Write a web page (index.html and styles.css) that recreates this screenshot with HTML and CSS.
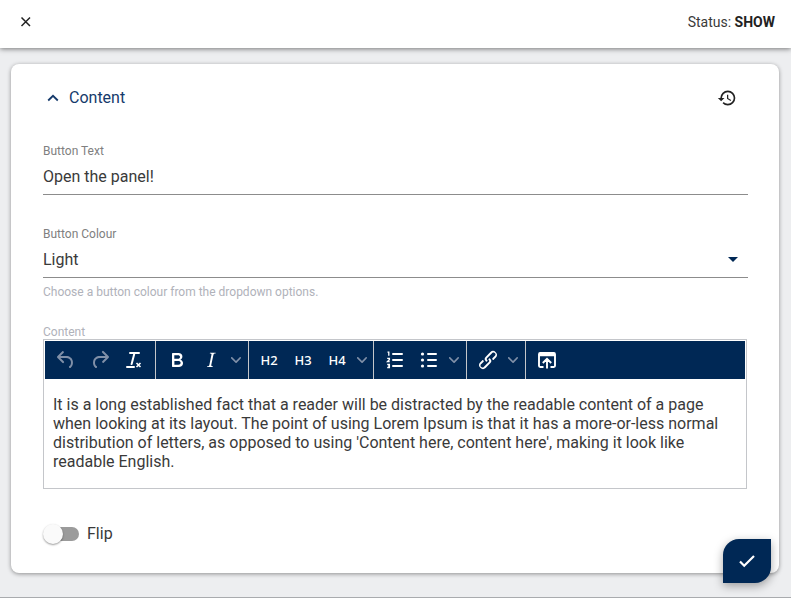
FILE: index.html
```html
<!DOCTYPE html>
<html lang="en">
<head>
<meta charset="utf-8">
<title>Content</title>
<link rel="stylesheet" href="styles.css">
</head>
<body>
<header class="topbar">
  <button class="icon-btn" type="button" aria-label="Close">
    <svg width="16" height="16" viewBox="0 0 16 16" fill="none" stroke="currentColor" stroke-width="1.500"><path d="M3.500 3.500l8.500 8.500M12 3.500L3.500 12"/></svg>
  </button>
  <div class="status">Status: <strong>SHOW</strong></div>
</header>
<main class="page">
  <form class="card">
    <div class="card-head">
      <button class="collapse" type="button">
        <svg width="20" height="20" viewBox="0 0 20 20" fill="none" stroke="currentColor" stroke-width="1.800"><path d="M5.200 13.500L10 8.800l4.800 4.700"/></svg>
        Content
      </button>
      <button class="icon-btn" type="button" aria-label="History">
        <svg width="20" height="20" viewBox="0 0 24 24" fill="currentColor"><path d="M13.500 8H12v5l4.280 2.540.72-1.210-3.500-2.080V8M13 3a9 9 0 0 0-9 9H1l3.960 4.030L9 12H6a7 7 0 0 1 7-7 7 7 0 0 1 7 7 7 7 0 0 1-7 7c-1.930 0-3.680-.79-4.940-2.060l-1.420 1.420A8.900 8.900 0 0 0 13 21a9 9 0 0 0 9-9 9 9 0 0 0-9-9"/></svg>
      </button>
    </div>

    <div class="field">
      <label for="text">Button Text</label>
      <input class="control" id="text" type="text" value="Open the panel!">
    </div>

    <div class="field">
      <label for="colour">Button Colour</label>
      <div class="select-wrap">
        <select class="control" id="colour"><option>Light</option><option>Dark</option></select>
        <svg class="caret" width="10" height="5" viewBox="0 0 10 5" aria-hidden="true"><path d="M0 0h10L5 5z" fill="#002855"/></svg>
      </div>
      <p class="hint">Choose a button colour from the dropdown options.</p>
    </div>

    <div class="rich">
      <div class="rich-label" id="rich-label">Content</div>
      <div class="editor">
        <div class="toolbar" role="toolbar" aria-label="Formatting">
          <div class="group">
            <button class="tool dim" type="button" aria-label="Undo"><svg width="24" height="24" viewBox="0 0 24 24"><path d="M6.400 8H12c3.700 0 6.200 2 6.800 5.100.6 2.700-.4 5.600-2.300 6.800a1 1 0 0 1-1-1.800c1.100-.6 1.800-2.700 1.400-4.600-.5-2.100-2.100-3.500-4.900-3.500H6.400l3.300 3.300a1 1 0 1 1-1.400 1.400l-5-5a1 1 0 0 1 0-1.400l5-5a1 1 0 0 1 1.400 1.400L6.400 8Z"/></svg></button>
            <button class="tool dim" type="button" aria-label="Redo"><svg width="24" height="24" viewBox="0 0 24 24"><path d="M17.600 10H12c-2.800 0-4.400 1.400-4.900 3.500-.4 2 .3 4 1.400 4.600a1 1 0 1 1-1 1.800c-2-1.200-2.900-4.100-2.300-6.800.6-3 3-5.100 6.800-5.100h5.600l-3.300-3.300a1 1 0 1 1 1.400-1.400l5 5a1 1 0 0 1 0 1.400l-5 5a1 1 0 0 1-1.400-1.400l3.300-3.300Z"/></svg></button>
            <button class="tool" type="button" aria-label="Remove format"><svg width="24" height="24" viewBox="0 0 24 24"><path d="M13.200 6a1 1 0 0 1 0 .2l-2.600 10a1 1 0 0 1-1 .8h-.2a.8.8 0 0 1-.8-1l2.600-10H8a1 1 0 1 1 0-2h9a1 1 0 0 1 0 2h-3.800ZM5 18h7a1 1 0 0 1 0 2H5a1 1 0 0 1 0-2Z"/><path class="line" d="M14.500 15l4 4M18.500 15l-4 4" stroke-width="1.600"/></svg></button>
          </div>
          <div class="group">
            <button class="tool" type="button" aria-label="Bold"><svg width="24" height="24" viewBox="0 0 24 24"><path d="M7.800 19c-.3 0-.5 0-.6-.2l-.2-.5V5.700c0-.2 0-.4.2-.5l.6-.2h5c1.500 0 2.700.3 3.500 1 .7.600 1.100 1.400 1.100 2.500a3 3 0 0 1-.6 1.900c-.4.600-1 1-1.600 1.200.4.100.9.300 1.300.6s.8.700 1 1.200c.4.400.5 1 .5 1.600 0 1.300-.4 2.300-1.300 3-.8.700-2.100 1-3.800 1H7.800Zm5-8.300c.6 0 1.200-.1 1.600-.5.400-.3.600-.7.600-1.300 0-1.100-.8-1.700-2.300-1.700H9.300v3.500h3.400Zm.5 6c.7 0 1.300-.1 1.700-.4.400-.4.600-.9.600-1.500s-.2-1-.7-1.400c-.4-.3-1-.4-2-.4H9.400v3.800h4Z"/></svg></button>
            <button class="tool" type="button" aria-label="Italic"><svg width="24" height="24" viewBox="0 0 24 24"><path d="M16.700 4.700l-.1.900h-.3c-.6 0-1 0-1.400.3-.3.300-.4.600-.5 1.100l-2.100 9.800v.6c0 .5.400.8 1.400.8h.2l-.2.800H8l.2-.8h.2c1.100 0 1.800-.5 2-1.500l2-9.800.1-.5c0-.6-.4-.8-1.400-.8h-.3l.2-.9h5.700Z"/></svg></button>
            <button class="more" type="button" aria-label="More styles"><svg width="10" height="10" viewBox="0 0 10 10"><path d="M8.700 2.200c.3-.3.800-.3 1 0 .4.400.4.900 0 1.200L5.700 7.800c-.3.300-.9.300-1.200 0L.2 3.400a.8.8 0 0 1 0-1.200c.3-.3.800-.3 1.100 0L5 6l3.700-3.800Z"/></svg></button>
          </div>
          <div class="group headings">
            <button class="tool" type="button">H2</button>
            <button class="tool" type="button">H3</button>
            <button class="tool" type="button">H4</button>
            <button class="more" type="button" aria-label="More headings"><svg width="10" height="10" viewBox="0 0 10 10"><path d="M8.700 2.200c.3-.3.800-.3 1 0 .4.400.4.900 0 1.200L5.700 7.800c-.3.300-.9.300-1.200 0L.2 3.400a.8.8 0 0 1 0-1.200c.3-.3.800-.3 1.100 0L5 6l3.700-3.800Z"/></svg></button>
          </div>
          <div class="group">
            <button class="tool" type="button" aria-label="Numbered list"><svg width="24" height="24" viewBox="0 0 24 24"><path class="line" d="M10 6h9M10 12h9M10 18h9" stroke-width="2" stroke-linecap="round"/><path class="line" d="M4.500 4.200h1.300v3.600M4.200 10.300h2.200v1.200L4.500 13.500h2.200M4.200 16.300h2.200v3.400H4.200M4.800 18h1.500" stroke-width="1.300"/></svg></button>
            <button class="tool" type="button" aria-label="Bulleted list"><svg width="24" height="24" viewBox="0 0 24 24"><path class="line" d="M11 6h8M11 12h8M11 18h8" stroke-width="2" stroke-linecap="round"/><circle cx="5.500" cy="6" r="1.600"/><circle cx="5.500" cy="12" r="1.600"/><circle cx="5.500" cy="18" r="1.600"/></svg></button>
            <button class="more" type="button" aria-label="More lists"><svg width="10" height="10" viewBox="0 0 10 10"><path d="M8.700 2.200c.3-.3.800-.3 1 0 .4.400.4.900 0 1.200L5.700 7.800c-.3.300-.9.300-1.200 0L.2 3.400a.8.8 0 0 1 0-1.200c.3-.3.800-.3 1.100 0L5 6l3.700-3.800Z"/></svg></button>
          </div>
          <div class="group">
            <button class="tool" type="button" aria-label="Link"><svg width="24" height="24" viewBox="0 0 24 24"><path d="M6.200 12.300a1 1 0 0 1 1.400 1.400l-2 2a2 2 0 1 0 2.600 2.800l4.800-4.800a1 1 0 0 0 0-1.400 1 1 0 1 1 1.400-1.300 2.900 2.900 0 0 1 0 4L9.600 20a3.900 3.900 0 0 1-5.500-5.500l2-2Zm11.600-.6a1 1 0 0 1-1.400-1.400l2-2a2 2 0 1 0-2.600-2.800L11 10.300a1 1 0 0 0 0 1.400A1 1 0 1 1 9.600 13a2.900 2.900 0 0 1 0-4L14.400 4a3.900 3.900 0 0 1 5.500 5.500l-2 2Z"/></svg></button>
            <button class="more" type="button" aria-label="More link options"><svg width="10" height="10" viewBox="0 0 10 10"><path d="M8.700 2.200c.3-.3.800-.3 1 0 .4.400.4.900 0 1.200L5.700 7.800c-.3.300-.9.300-1.200 0L.2 3.400a.8.8 0 0 1 0-1.200c.3-.3.800-.3 1.100 0L5 6l3.700-3.800Z"/></svg></button>
          </div>
          <div class="group">
            <button class="tool" type="button" aria-label="Open in window"><svg width="20" height="20" viewBox="0 0 20 20"><path class="line" d="M6.500 17H3.200a1.200 1.200 0 0 1-1.200-1.200V4.200A1.200 1.200 0 0 1 3.200 3h13.600A1.200 1.200 0 0 1 18 4.200v11.600a1.200 1.200 0 0 1-1.200 1.200H13.500M10 18.500V9.500M5.800 13L10 8.800l4.200 4.200" stroke-width="1.900"/><path class="line" d="M2 4.500h16" stroke-width="3.500"/></svg></button>
          </div>
        </div>
        <div class="editor-body" contenteditable="true" role="textbox" aria-multiline="true" aria-labelledby="rich-label" spellcheck="false">It is a long established fact that a reader will be distracted by the readable content of a page when looking at its layout. The point of using Lorem Ipsum is that it has a more-or-less normal distribution of letters, as opposed to using 'Content here, content here', making it look like readable English.</div>
      </div>
    </div>

    <label class="switch"><input type="checkbox" role="switch">Flip</label>
  </form>
</main>
<button class="fab" type="button" aria-label="Save">
  <svg width="20" height="20" viewBox="0 0 20 20" fill="none" stroke="#fff" stroke-width="2.200"><path d="M3 10.500l4.200 4.200L17 5"/></svg>
</button>
</body>
</html>
```
FILE: styles.css
```css
* { box-sizing: border-box; }

body {
  margin: 0;
  min-height: 100vh;
  display: flex;
  flex-direction: column;
  background: #edeef0;
  border-bottom: 1px solid #a9abae;
  color: #3a3a3a;
  font: 16px/19px Roboto, sans-serif;
}

button {
  margin: 0;
  padding: 0;
  border: 0;
  background: none;
  color: inherit;
  font: inherit;
  cursor: pointer;
}

svg { display: block; }

.topbar {
  display: flex;
  align-items: center;
  justify-content: space-between;
  height: 48px;
  padding: 0 16px 4px;
  background: #fff;
  box-shadow: 0 1px 5px rgba(0, 0, 0, .5);
}

.icon-btn {
  display: grid;
  place-items: center;
  width: 20px;
  height: 20px;
  color: #222;
}

.status { font-size: 14px; }
.status strong { color: #222; }

.page { padding: 16px 12px 24px 11px; }

.card {
  padding: 24px 31px 30px 32px;
  border-radius: 8px;
  background: #fff;
  box-shadow: 0 1px 4px rgba(0, 0, 0, .4);
}

.card-head {
  display: flex;
  align-items: center;
  justify-content: space-between;
  height: 20px;
  margin-bottom: 36px;
  padding-right: 11px;
}

.collapse {
  display: flex;
  align-items: center;
  gap: 6px;
  padding-bottom: 2px;
  color: #153a6b;
}

.field { margin-bottom: 32px; }

.field label,
.rich-label,
.hint {
  display: block;
  margin: 0;
  font-size: 12px;
  line-height: 14px;
}

.field label { color: #808080; }

.control {
  display: block;
  width: 100%;
  height: 37px;
  padding: 1px 0 0;
  border: 0;
  border-bottom: 1px solid #8c8c8c;
  border-radius: 0;
  outline: 0;
  appearance: none;
  background: transparent;
  color: #3a3a3a;
  font: inherit;
}

.select-wrap { position: relative; }

.caret {
  position: absolute;
  top: 16px;
  right: 10px;
  pointer-events: none;
}

.hint,
.rich-label { color: #b0b2ba; }

.hint { margin-top: 7px; }

.rich { margin-right: 1px; margin-top: -6px; }

.editor {
  border: 1px solid #c4c6ca;
  padding: 1px;
}

.toolbar {
  display: flex;
  height: 38px;
  background: #002855;
  color: #fff;
}

.group {
  display: flex;
  padding: 0 4px;
  border-right: 1px solid #c4c6ca;
}

.group:last-child { border-right: 0; }
.headings { padding: 0 3px; }

.tool,
.more {
  display: grid;
  place-items: center;
}

.tool { width: 34px; }
.more { width: 16px; }

.headings .tool {
  font-family: "Noto Sans", sans-serif;
  font-size: 13px;
  font-weight: 500;
}

.toolbar svg { fill: #fff; }

.toolbar .dim svg,
.toolbar .more svg { fill: #8090a8; }

.line {
  fill: none;
  stroke: #fff;
}

.editor-body {
  padding: 16px 8px;
  outline: 0;
}

.switch {
  display: flex;
  align-items: center;
  gap: 8px;
  width: max-content;
  margin-top: 35px;
}

.switch input {
  appearance: none;
  display: flex;
  align-items: center;
  width: 35px;
  height: 14px;
  margin: 0 0 0 1px;
  border-radius: 7px;
  background: #9b9b9b;
}

.switch input::before {
  content: "";
  flex: none;
  width: 20px;
  height: 20px;
  margin-left: -1px;
  border-radius: 50%;
  background: #fafafa;
  box-shadow: 0 1px 2px rgba(0, 0, 0, .4);
}

.switch input:checked::before { margin-left: 16px; }

.fab {
  position: fixed;
  right: 20px;
  bottom: 15px;
  display: grid;
  place-items: center;
  width: 48px;
  height: 44px;
  border-radius: 16px 0;
  background: #002855;
  box-shadow: 0 3px 10px rgba(0, 0, 0, .35);
}
```
